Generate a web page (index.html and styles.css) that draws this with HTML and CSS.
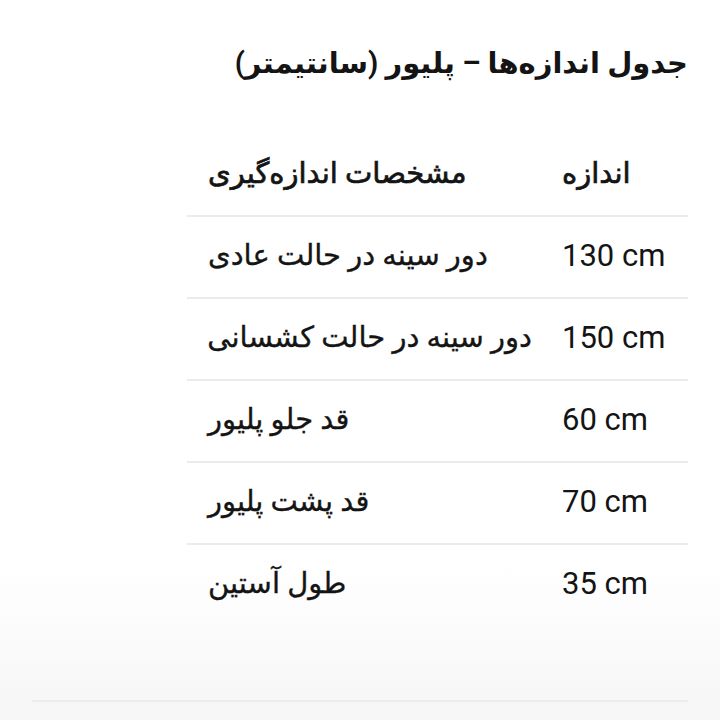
FILE: index.html
```html
<!DOCTYPE html>
<html lang="fa" dir="rtl">
<head>
<meta charset="utf-8">
<link rel="stylesheet" href="styles.css">
</head>
<body>
<div class="page">
  <h2 class="title">جدول اندازه‌ها – پلیور (سانتیمتر)</h2>
  <table class="sizes">
    <colgroup><col class="col-val"><col class="col-desc"></colgroup>
    <thead>
      <tr><th class="c-val">اندازه</th><th class="c-desc">مشخصات اندازه‌گیری</th></tr>
    </thead>
    <tbody>
      <tr><td class="c-val"><bdi dir="ltr">130 cm</bdi></td><td class="c-desc">دور سینه در حالت عادی</td></tr>
      <tr><td class="c-val"><bdi dir="ltr">150 cm</bdi></td><td class="c-desc">دور سینه در حالت کشسانی</td></tr>
      <tr><td class="c-val"><bdi dir="ltr">60 cm</bdi></td><td class="c-desc">قد جلو پلیور</td></tr>
      <tr><td class="c-val"><bdi dir="ltr">70 cm</bdi></td><td class="c-desc">قد پشت پلیور</td></tr>
      <tr class="last"><td class="c-val"><bdi dir="ltr">35 cm</bdi></td><td class="c-desc">طول آستین</td></tr>
    </tbody>
  </table>
  <div class="divider"></div>
</div>
</body>
</html>
```
FILE: styles.css
```css
html, body {
  margin: 0;
  padding: 0;
  background: #ffffff;
}
body {
  height: 720px;
  overflow: hidden;
  background: linear-gradient(to bottom, #ffffff 0, #ffffff 560px, #f6f6f6 720px);
  font-family: Roboto, "DejaVu Sans", sans-serif;
  color: #141414;
}
.page {
  padding: 0 32px;
}
.title {
  margin: 0;
  padding-top: 40px;
  font-size: 29px;
  line-height: 46px;
  font-weight: 700;
  text-align: right;
}
.sizes {
  margin-top: 49px;
  width: 501px;
  border-collapse: collapse;
  table-layout: fixed;
}
.col-val {
  width: 147px;
}
.sizes th, .sizes td {
  text-align: left;
  height: 76px;
  padding: 0 21px 4px 21px;
  border-bottom: 2px solid #ebebeb;
  font-size: 29px;
  font-weight: 400;
  vertical-align: middle;
  white-space: nowrap;
}
.sizes .c-desc {
  padding-right: 9px;
  -webkit-text-stroke: 0.35px #141414;
}
.sizes th.c-desc, .sizes th.c-val {
  -webkit-text-stroke: 0.7px #141414;
}
.sizes td.c-val {
  font-size: 31px;
}
.sizes tr.last td {
  border-bottom: none;
}
.divider {
  margin-top: 75px;
  border-top: 2px solid #ececec;
}
```
